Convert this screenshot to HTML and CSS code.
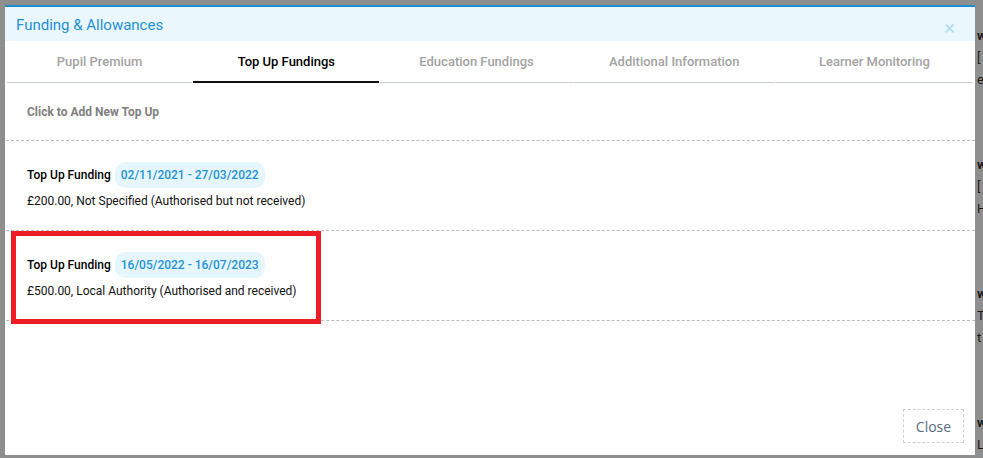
FILE: index.html
```html
<!DOCTYPE html>
<html lang="en">

<head>
    <meta charset="UTF-8" />
    <meta name="viewport" content="width=device-width, initial-scale=1.0" />
    <title>Funding &amp; Allowances</title>
    <link rel="stylesheet" href="styles.css">
</head>

<body>
    <div class="page">
        <div class="modal">
            <div class="modal-header">
                <h2>Funding &amp; Allowances</h2>
                <span class="close-x">&times;</span>
            </div>

            <div class="tabs">
                <div class="tab">Pupil Premium</div>
                <div class="tab active">Top Up Fundings</div>
                <div class="tab">Education Fundings</div>
                <div class="tab">Additional Information</div>
                <div class="tab">Learner Monitoring</div>
            </div>

            <div class="add-link">Click to Add New Top Up</div>

            <div class="fund-list">
                <div class="fund-item">
                    <div class="fund-title">Top Up Funding <span class="dates">02/11/2021 - 27/03/2022</span></div>
                    <div class="fund-desc">£200.00, Not Specified (Authorised but not received)</div>
                </div>
                <div class="fund-item">
                    <div class="fund-title">Top Up Funding <span class="dates">16/05/2022 - 16/07/2023</span></div>
                    <div class="fund-desc">£500.00, Local Authority (Authorised and received)</div>
                    <div class="highlight"></div>
                </div>
            </div>

            <div class="modal-footer">
                <button class="btn-close">Close</button>
            </div>
        </div>

        <div class="behind">
            <div class="behind-block">
                <b>w</b>
                <span>[</span>
                <span>e</span>
            </div>
            <div class="behind-block">
                <b>w</b>
                <span>[</span>
                <span>H</span>
            </div>
            <div class="behind-block">
                <b>w</b>
                <span>T</span>
                <span>t</span>
            </div>
            <div class="behind-block">
                <b>w</b>
                <span>L</span>
            </div>
        </div>
    </div>
</body>

</html>
```

FILE: styles.css
```css
body {
    margin: 0;
    font-family: Roboto, "Liberation Sans", sans-serif;
    background: #8e8e8e;
}

.page {
    display: flex;
    height: 458px;
    overflow: hidden;
}

.modal {
    position: relative;
    width: 970px;
    height: 450px;
    margin: 5px 0 0 5px;
    background: #ffffff;
    display: flex;
    flex-direction: column;
    flex-shrink: 0;
}

.modal-header {
    height: 34px;
    border-top: 2px solid #1a8fd6;
    background: #eaf7fd;
    display: flex;
    align-items: center;
    justify-content: space-between;
    padding: 2px 20px 0 11px;
    box-sizing: border-box;
    height: 36px;
}

.modal-header h2 {
    margin: 0;
    font-size: 15px;
    font-weight: 400;
    color: #2390d8;
}

.close-x {
    color: #b5dcf0;
    font-size: 20px;
    line-height: 1;
    margin-top: 6px;
}

.tabs {
    display: grid;
    grid-template-columns: 186fr 187fr 193fr 202fr 198fr;
    column-gap: 1px;
    margin: 0 2px;
    height: 42px;
}

.tab {
    display: flex;
    align-items: center;
    justify-content: center;
    font-size: 13px;
    font-weight: 500;
    color: #a3a3a3;
    border-bottom: 1px solid #c8d1c8;
}

.tab.active {
    color: #000000;
    border-bottom: 2px solid #111111;
    padding-top: 1px;
}

.add-link {
    height: 57px;
    padding-left: 21px;
    display: flex;
    align-items: center;
    font-size: 12px;
    font-weight: 700;
    color: #808080;
    border-bottom: 1px dashed #bdbdbd;
    margin-left: 1px;
}

.fund-item {
    position: relative;
    height: 90px;
    padding-left: 21px;
    border-bottom: 1px dashed #bdbdbd;
    margin-left: 1px;
    box-sizing: border-box;
    padding-top: 21px;
}

.fund-title {
    font-size: 12px;
    font-weight: 500;
    color: #000000;
    display: flex;
    align-items: center;
}

.dates {
    margin-left: 4px;
    background: #e6f6fd;
    color: #2492d6;
    font-weight: 500;
    font-size: 12px;
    padding: 6px 6px;
    border-radius: 10px;
}

.fund-desc {
    font-size: 12px;
    color: #111111;
    margin-top: 6px;
}

.highlight {
    position: absolute;
    left: 5px;
    top: 0;
    width: 300px;
    height: 83px;
    border: 5px solid #ee1c25;
}

.modal-footer {
    margin-top: auto;
    display: flex;
    justify-content: flex-end;
    padding: 0 11px 12px 0;
}

.btn-close {
    width: 61px;
    height: 34px;
    background: #ffffff;
    border: 1px dashed #cfcfcf;
    font-family: "Open Sans", sans-serif;
    font-size: 14px;
    color: #5a6b80;
    padding: 0;
}

.behind {
    display: flex;
    flex-direction: column;
    padding-left: 2px;
    padding-top: 25px;
    font-size: 13px;
    color: #1a1a1a;
}

.behind-block {
    display: flex;
    flex-direction: column;
    flex-shrink: 0;
    height: 129px;
    line-height: 22px;
}

.behind-block b {
    font-weight: 700;
}
```
